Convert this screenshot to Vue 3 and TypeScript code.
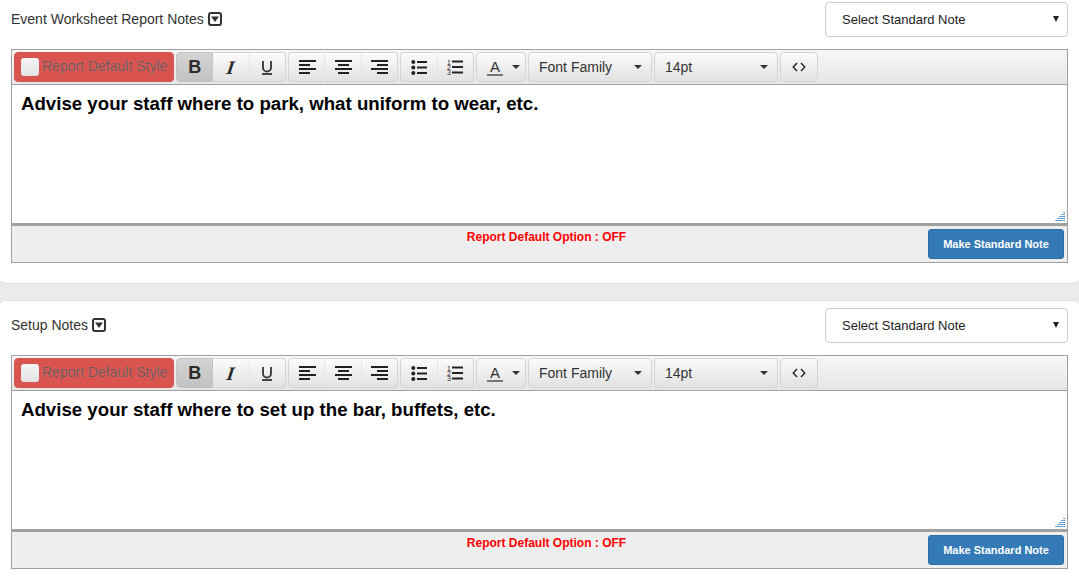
<script setup lang="ts">
const notes = [
  { title: 'Event Worksheet Report Notes', text: 'Advise your staff where to park, what uniform to wear, etc.', top: 'first' },
  { title: 'Setup Notes', text: 'Advise your staff where to set up the bar, buffets, etc.', top: 'second' },
]
</script>

<template>
  <div class="page">
    <section v-for="note in notes" :key="note.title" class="panel" :class="note.top">
      <div class="panel-head">
        <div class="panel-title">
          <span>{{ note.title }}</span>
          <svg class="toggle" width="14" height="14" viewBox="0 0 14 14">
            <rect x="1" y="1" width="12" height="12" rx="2" fill="#fff" stroke="#333" stroke-width="2" />
            <path d="M3 4.500h8L7 10z" fill="#333" />
          </svg>
        </div>
        <div class="select">
          <span>Select Standard Note</span>
          <i class="select-caret"></i>
        </div>
      </div>

      <div class="editor">
        <div class="toolbar">
          <div class="btn report">
            <span class="check"></span>
            <span class="report-label">Report Default Style</span>
          </div>

          <div class="group wide">
            <div class="btn icon active"><b class="glyph">B</b></div>
            <div class="btn icon"><b class="glyph italic">I</b></div>
            <div class="btn icon">
              <svg width="12" height="15" viewBox="0 0 12 15">
                <path d="M2 1v6.500a4 4 0 0 0 8 0V1" fill="none" stroke="#333" stroke-width="1.800" />
                <path d="M1 14h10" stroke="#333" stroke-width="1.800" />
              </svg>
            </div>
          </div>

          <div class="group wide">
            <div class="btn icon">
              <svg class="nudge" width="17" height="14" viewBox="0 0 17 14">
                <path d="M0 1h17M0 5h11M0 9h17M0 13h11" stroke="#222" stroke-width="2" />
              </svg>
            </div>
            <div class="btn icon">
              <svg class="nudge" width="17" height="14" viewBox="0 0 17 14">
                <path d="M0 1h17M3 5h11M0 9h17M3 13h11" stroke="#222" stroke-width="2" />
              </svg>
            </div>
            <div class="btn icon">
              <svg class="nudge" width="17" height="14" viewBox="0 0 17 14">
                <path d="M0 1h17M6 5h11M0 9h17M6 13h11" stroke="#222" stroke-width="2" />
              </svg>
            </div>
          </div>

          <div class="group narrow">
            <div class="btn icon">
              <svg width="16" height="15" viewBox="0 0 16 15">
                <circle cx="2.300" cy="2" r="2" fill="#222" />
                <circle cx="2.300" cy="7.500" r="2" fill="#222" />
                <circle cx="2.300" cy="13" r="2" fill="#222" />
                <path d="M6 2h10M6 7.500h10M6 13h10" stroke="#222" stroke-width="1.800" />
              </svg>
            </div>
            <div class="btn icon">
              <svg width="16" height="16" viewBox="0 0 16 16">
                <text x="0" y="5.500" class="num">1</text>
                <text x="0" y="10.800" class="num">2</text>
                <text x="0" y="16" class="num">3</text>
                <path d="M5 2.500h11M5 8h11M5 13.500h11" stroke="#222" stroke-width="1.800" />
              </svg>
            </div>
          </div>

          <div class="btn color">
            <span class="color-a">A</span>
            <i class="caret"></i>
          </div>
          <div class="btn drop family">
            <span>Font Family</span>
            <i class="caret"></i>
          </div>
          <div class="btn drop size">
            <span>14pt</span>
            <i class="caret"></i>
          </div>
          <div class="btn code">
            <svg width="14" height="10" viewBox="0 0 14 10">
              <path d="M5 1 1.200 5 5 9M9 1l3.800 4L9 9" fill="none" stroke="#222" stroke-width="1.400" />
            </svg>
          </div>
        </div>

        <div class="body">
          <p>{{ note.text }}</p>
          <svg class="grip" width="10" height="9" viewBox="0 0 10 9">
            <path d="M8 .500h2M6 2.500h4M4 4.500h6M2 6.500h8M0 8.500h10" stroke="#7fb2e0" />
            <path d="M9 .500h1M7 2.500h3M5 4.500h5M3 6.500h7M1 8.500h9" stroke="#3f8ad0" stroke-dasharray="1 1" />
          </svg>
        </div>

        <div class="foot">
          <span class="status">Report Default Option : OFF</span>
          <button class="save" type="button">Make Standard Note</button>
        </div>
      </div>
    </section>
  </div>
</template>

<style scoped>
.page {
  height: 580px;
  background: #ebebed;
  overflow: hidden;
  font-family: "Liberation Sans", Arial, sans-serif;
  color: #333;
}
.panel {
  background: #fff;
  padding: 2px 11px 20px;
  border-bottom: 1px solid #e2e2e2;
}
.panel.first {
  border-radius: 0 0 6px 6px;
}
.panel.second {
  margin-top: 16px;
  padding: 7px 11px 11px;
  border-top: 1px solid #e2e2e2;
  border-bottom: 0;
  border-radius: 6px 6px 0 0;
  height: 280px;
}
.panel-head {
  display: flex;
  justify-content: space-between;
  height: 35px;
}
.panel-title {
  display: flex;
  align-items: center;
  gap: 4.400px;
  font-size: 14px;
  padding-bottom: 1px;
}
.toggle {
  display: block;
}
.select {
  width: 243px;
  box-sizing: border-box;
  height: 35px;
  border: 1px solid #ccc;
  border-radius: 4px;
  background: #fff;
  padding: 0 8px 0 16px;
  display: flex;
  align-items: center;
  justify-content: space-between;
  font-size: 13px;
  color: #222;
}
.select-caret {
  width: 0;
  height: 0;
  border-left: 3px solid transparent;
  border-right: 3px solid transparent;
  border-top: 6px solid #222;
  margin-bottom: 2px;
}
.editor {
  margin-top: 12px;
  border: 1px solid #a0a0a0;
}
.toolbar {
  height: 35px;
  box-sizing: border-box;
  border-bottom: 1px solid #a0a0a0;
  background: linear-gradient(#f7f7f7, #e6e6e6);
  padding: 2px 2px 0;
  display: flex;
  gap: 2px;
}
.group {
  display: flex;
}
.wide {
  width: 110px;
}
.narrow {
  width: 74px;
}
.btn {
  height: 30px;
  box-sizing: border-box;
  border: 1px solid #d4d4d4;
  border-radius: 4px;
  background: linear-gradient(#fbfbfb, #e2e2e2);
  display: flex;
  align-items: center;
  justify-content: center;
  font-size: 14px;
}
.group .btn {
  border-radius: 0;
  border-left-width: 0;
  border-right-color: #e6e6e6;
}
.group .btn:first-child {
  border-left-width: 1px;
  border-radius: 4px 0 0 4px;
}
.group .btn:last-child {
  border-right-color: #d4d4d4;
  border-radius: 0 4px 4px 0;
}
.report {
  width: 160px;
  background: #d9534f;
  border-color: #d9534f;
  color: #6f5656;
  text-shadow: 0 0 1px rgba(255, 255, 255, 0.3);
  justify-content: flex-start;
  padding-left: 6px;
  gap: 3px;
}
.report-label {
  margin-top: -2px;
}
.check {
  width: 18px;
  height: 18px;
  border-radius: 3px;
  background: linear-gradient(#f5f5f5, #e2e2e2);
}
.icon {
  flex: 1;
}
.nudge {
  margin-left: 1px;
}
.group .active {
  background: linear-gradient(#d4d4d4, #c2c2c2);
  border-color: #c4c4c4;
}
.glyph {
  font-size: 18px;
  line-height: 1;
  color: #2b2b2b;
}
.italic {
  font-family: "Liberation Serif", serif;
  font-style: italic;
  font-size: 19px;
  transform: skewX(-8deg);
}
.num {
  font-size: 7px;
  fill: #3a1a1a;
  font-family: "Liberation Sans", Arial, sans-serif;
}
.color {
  width: 50px;
  justify-content: flex-start;
  padding-left: 10px;
  gap: 9px;
}
.color-a {
  border-bottom: 2px solid #777;
  width: 16px;
  text-align: center;
  line-height: 15px;
  font-size: 15px;
  color: #333;
}
.caret {
  width: 0;
  height: 0;
  border-left: 4px solid transparent;
  border-right: 4px solid transparent;
  border-top: 4px solid #333;
}
.drop {
  justify-content: space-between;
  padding: 0 9px 0 10px;
}
.family {
  width: 124px;
}
.size {
  width: 124px;
}
.code {
  width: 38px;
}
.body {
  height: 138px;
  position: relative;
  box-sizing: border-box;
  padding: 9px;
  background: #fff;
}
.body p {
  margin: 0;
  font-size: 18.670px;
  line-height: 20px;
  font-weight: 700;
  color: #000;
}
.grip {
  position: absolute;
  right: 2px;
  bottom: 2px;
}
.foot {
  height: 39px;
  box-sizing: border-box;
  border-top: 3px solid #a0a0a0;
  background: #eee;
  position: relative;
  display: flex;
  justify-content: flex-end;
  padding: 3px 3px 0 0;
}
.status {
  position: absolute;
  left: 14px;
  right: 0;
  top: 4px;
  text-align: center;
  font-size: 12px;
  font-weight: 700;
  color: #f00;
}
.save {
  width: 136px;
  height: 30px;
  border: 1px solid #2e6da4;
  border-radius: 3px;
  background: #337ab7;
  color: #fff;
  font-family: inherit;
  font-size: 11px;
  font-weight: 700;
  padding: 0;
}
</style>
